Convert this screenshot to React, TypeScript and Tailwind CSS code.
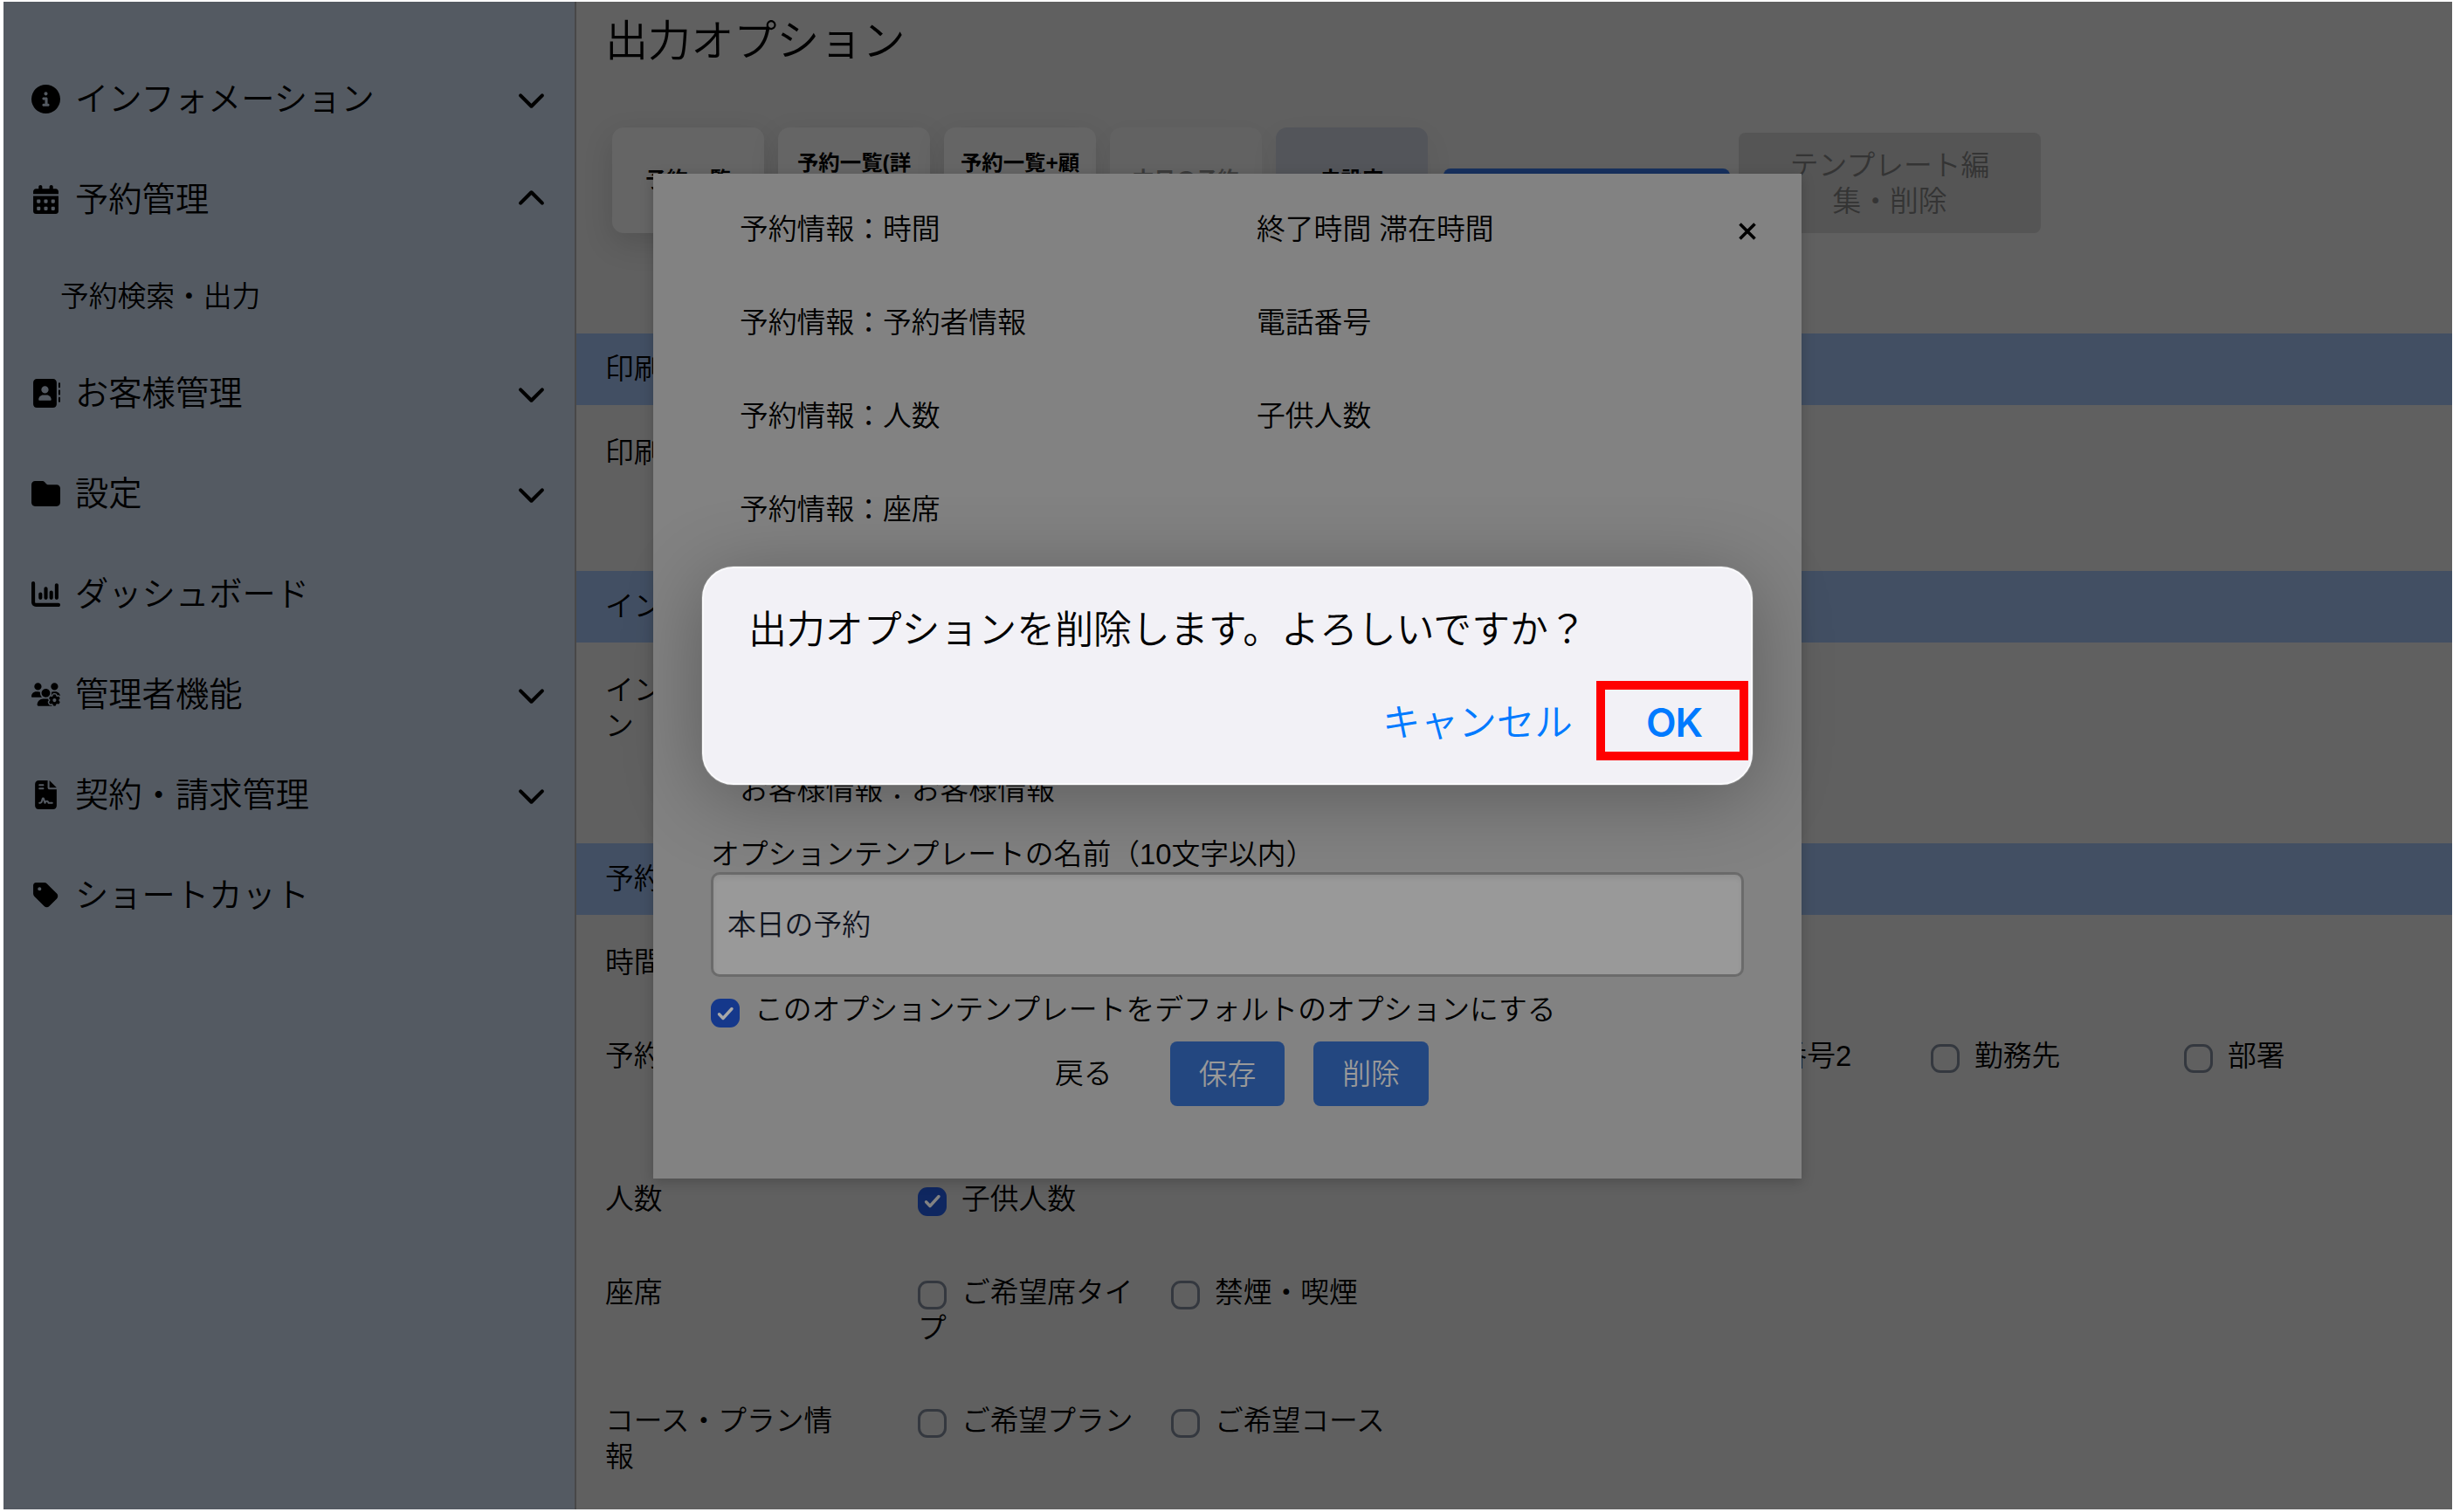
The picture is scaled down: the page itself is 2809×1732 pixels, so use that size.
import type { ReactNode } from "react";
import type { IconType } from "react-icons";
import {
  FaAddressBook,
  FaCalendarDays,
  FaChartColumn,
  FaChevronDown,
  FaChevronUp,
  FaCircleInfo,
  FaFileContract,
  FaFolder,
  FaTag,
  FaUsersGear,
} from "react-icons/fa6";

type NavItem = { label: string; icon: IconType; chevron?: "up" | "down"; children?: string[] };

const NAV: NavItem[] = [
  { label: "インフォメーション", icon: FaCircleInfo, chevron: "down" },
  { label: "予約管理", icon: FaCalendarDays, chevron: "up", children: ["予約検索・出力"] },
  { label: "お客様管理", icon: FaAddressBook, chevron: "down" },
  { label: "設定", icon: FaFolder, chevron: "down" },
  { label: "ダッシュボード", icon: FaChartColumn },
  { label: "管理者機能", icon: FaUsersGear, chevron: "down" },
  { label: "契約・請求管理", icon: FaFileContract, chevron: "down" },
  { label: "ショートカット", icon: FaTag },
];

function Sidebar() {
  return (
    <nav className="w-[656px] shrink-0 border-r-2 border-[#484848] bg-[#545a62] pt-[54px] text-[38.3px] text-black">
      {NAV.map(({ label, icon: Icon, chevron, children }) => (
        <div key={label}>
          <div className="flex h-[115px] items-center pr-[33px] pl-[32px]">
            <span className="flex w-[33px] justify-center">
              <Icon className="size-[33px]" />
            </span>
            <span className="ml-[17px] flex-1 pt-px leading-none">{label}</span>
            {chevron === "down" && <FaChevronDown className="size-[33px]" />}
            {chevron === "up" && <FaChevronUp className="size-[33px]" />}
          </div>
          {children?.map((child) => (
            <div key={child} className="flex h-[107px] items-center pl-[65px] text-[32.75px]">
              {child}
            </div>
          ))}
        </div>
      ))}
    </nav>
  );
}

function Checkbox({ checked, bright }: { checked?: boolean; bright?: boolean }) {
  if (!checked) {
    return <span className="inline-block size-[33px] shrink-0 rounded-[11px] border-[3px] border-[#34383f] align-middle" />;
  }
  return (
    <span
      className={`inline-flex size-[33px] shrink-0 items-center justify-center rounded-[11px] align-middle ${
        bright ? "bg-[#15388b] text-[#a8a8a8]" : "bg-[#0f2760] text-[#828282]"
      }`}
    >
      <svg viewBox="0 0 20 16" className="h-[16px] w-[20px]" fill="none" stroke="currentColor" strokeWidth="3.4" strokeLinecap="round" strokeLinejoin="round">
        <path d="M2.5 8.8 7 13.5 17 2.5" />
      </svg>
    </span>
  );
}

function Option({ label, checked }: { label: string; checked?: boolean }) {
  return (
    <div className="mr-[40px] w-[250px] break-all">
      <span className="relative top-[2px] mr-[17px] inline-block h-[41px] align-top leading-[38px]">
        <Checkbox checked={checked} />
      </span>
      {label}
    </div>
  );
}

function Band({ children }: { children: string }) {
  return <div className="flex h-[82px] items-center bg-[#424f63] pl-[33px] whitespace-nowrap">{children}</div>;
}

function Row({ label, className, children }: { label: string; className: string; children?: ReactNode }) {
  return (
    <div className={`flex pt-[34px] pl-[33px] leading-[41px] ${className}`}>
      <div className="mr-[92px] w-[266px] shrink-0 break-all">{label}</div>
      <div className="flex">{children}</div>
    </div>
  );
}

const TABS = [
  { label: "予約一覧", tone: "bg-[#656565] text-black shadow-[0_12px_34px_rgba(0,0,0,0.14)]" },
  { label: "予約一覧(詳細)", tone: "bg-[#656565] text-black shadow-[0_12px_34px_rgba(0,0,0,0.12)]" },
  { label: "予約一覧+顧客", tone: "bg-[#656565] text-black shadow-[0_12px_34px_rgba(0,0,0,0.12)]" },
  { label: "本日の予約", tone: "bg-[#626262] text-[#3c3c3c] shadow-[0_12px_34px_rgba(0,0,0,0.04)]" },
  { label: "未設定", tone: "bg-[#53555a] text-black shadow-[0_12px_34px_rgba(0,0,0,0.06)]" },
];

function Content() {
  return (
    <main className="min-w-0 flex-1 overflow-hidden bg-[#606060] text-[32.75px] text-black">
      <h1 className="flex h-[86px] items-center pt-[5px] pl-[33px] text-[49.1px]">出力オプション</h1>
      <div className="mt-[58px] flex h-[121px] items-end pl-[41px]">
        <div className="flex gap-4">
          {TABS.map((tab) => (
            <div
              key={tab.label}
              className={`flex h-[121px] w-[174px] items-center justify-center rounded-[13px] px-[17px] pb-[3px] text-center text-[24.4px] leading-[37px] font-bold break-all ${tab.tone}`}
            >
              {tab.label}
            </div>
          ))}
        </div>
        <div className="ml-[18px] h-[74px] w-[328px] rounded-[8px] bg-[#17315f]" />
        <div className="ml-[10px] flex h-[115px] w-[346px] items-center rounded-[8px] bg-[#555555] px-[54px] pt-px text-center leading-[41px] break-all text-[#343434]">
          テンプレート編集・削除
        </div>
      </div>
      <div className="mt-[115px]">
        <Band>印刷</Band>
        <Row label="印刷" className="h-[190px]" />
        <Band>インフォ</Band>
        <Row label="インフォメーション" className="h-[230px]" />
        <Band>予約情報</Band>
        <Row label="時間" className="h-[107px]" />
        <Row label="予約者情報" className="h-[164px]">
          <div className="w-[870px]" />
          <Option label="電話番号2" />
          <Option label="勤務先" />
          <Option label="部署" />
        </Row>
        <Row label="人数" className="h-[107px]">
          <Option label="子供人数" checked />
        </Row>
        <Row label="座席" className="h-[147px]">
          <Option label="ご希望席タイプ" />
          <Option label="禁煙・喫煙" />
        </Row>
        <Row label="コース・プラン情報" className="h-[148px]">
          <Option label="ご希望プラン" />
          <Option label="ご希望コース" />
        </Row>
      </div>
    </main>
  );
}

const SUMMARY: [string, string][] = [
  ["予約情報：時間", "終了時間 滞在時間"],
  ["予約情報：予約者情報", "電話番号"],
  ["予約情報：人数", "子供人数"],
  ["予約情報：座席", ""],
  ["", ""],
  ["", ""],
  ["お客様情報：お客様情報", ""],
];

function TemplateModal() {
  return (
    <section className="absolute top-[199px] left-[748px] h-[1151px] w-[1315px] bg-[#828282] pt-[10px] text-[32.8px] text-black shadow-[0_4px_14px_rgba(0,0,0,0.2)]">
      <svg viewBox="0 0 20 20" className="absolute top-[56px] right-[52px] size-[20px]" fill="none" stroke="currentColor" strokeWidth="3.6">
        <path d="M1.5 1.5 18.5 18.5M18.5 1.5 1.5 18.5" />
      </svg>
      {SUMMARY.map(([name, value], i) => (
        <div key={i} className="flex h-[107px] items-center pt-px pl-[99px]">
          <div className="w-[592px]">{name}</div>
          <div>{value}</div>
        </div>
      ))}
      <div className="px-[66px]">
        <div className="h-[41px] leading-[41px]">オプションテンプレートの名前（10文字以内）</div>
        <div className="flex h-[120px] w-[1183px] items-center rounded-[10px] border-[3px] border-[#6b6b6b] bg-[#999999] pt-[2px] pl-[16px] text-[#10141f] shadow-[inset_0_4px_5px_rgba(0,0,0,0.06)]">
          本日の予約
        </div>
        <div className="mt-[17px] flex h-[41px] items-start leading-[41px]">
          <span className="mt-[8px] flex">
            <Checkbox checked bright />
          </span>
          <span className="ml-[17px]">このオプションテンプレートをデフォルトのオプションにする</span>
        </div>
      </div>
      <div className="mt-[16px] flex h-[74px] items-center pl-[460px] leading-[76px]">
        <span className="w-[132px]">戻る</span>
        <span className="mr-[33px] flex h-[74px] w-[131px] justify-center rounded-[8px] bg-[#234780] text-[#999999]">保存</span>
        <span className="flex h-[74px] w-[132px] justify-center rounded-[8px] bg-[#234780] text-[#999999]">削除</span>
      </div>
    </section>
  );
}

function ConfirmDialog() {
  return (
    <section className="absolute top-[649px] left-[804px] h-[250px] w-[1203px] rounded-[36px] border-2 border-[#fafafc] bg-[#f2f1f6] pt-[41px] pl-[51px] text-[43.9px] shadow-[0_0_0_1px_rgba(150,150,150,0.6),0_14px_90px_rgba(0,0,0,0.3)]">
      <p className="h-[60px] leading-[60px] whitespace-nowrap text-black">出力オプションを削除します。よろしいですか？</p>
      <div className="mt-[46px] flex h-[60px] items-center pl-[726px] leading-[60px] text-[#007aff]">
        <span className="w-[302px] text-[43.6px]">キャンセル</span>
        <span className="font-[Inter] text-[45px] font-semibold tracking-[-1.2px]">OK</span>
      </div>
      <div className="absolute top-[129px] left-[1022px] h-[91px] w-[174px] border-[10px] border-[#ff0000]" />
    </section>
  );
}

export default function App() {
  return (
    <div
      lang="ja"
      className="relative flex h-[1732px] w-[2809px] overflow-hidden bg-white pt-[2px] pr-px pb-[3px] pl-[4px] font-['Liberation_Sans','Noto_Sans_CJK_JP',sans-serif] font-[350]"
    >
      <Sidebar />
      <Content />
      <TemplateModal />
      <ConfirmDialog />
    </div>
  );
}
